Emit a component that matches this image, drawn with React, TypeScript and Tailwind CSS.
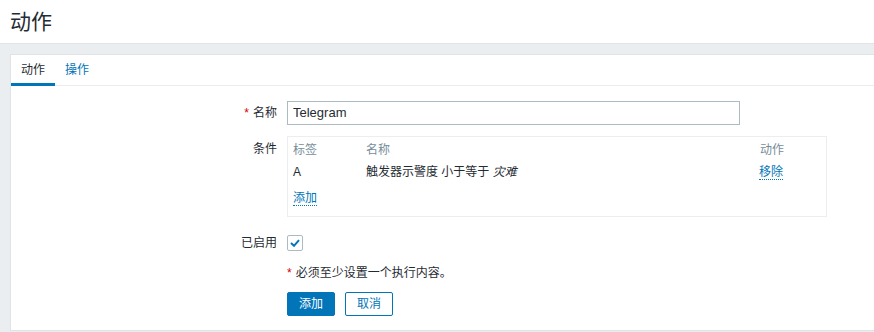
import React from "react";

const font = { fontFamily: '"Liberation Sans", Arial, "Noto Sans CJK SC", sans-serif' };

export default function App() {
  return (
    <div className="w-[874px] h-[332px] overflow-hidden bg-[#ebeef0] text-[12px] text-[#1f2c33]" style={font}>
      <header className="h-[44px] bg-white border-b border-[#dfe4e7] flex items-center pl-[10px]">
        <h1 className="text-[21px] leading-none font-normal text-[#1f2c33]">动作</h1>
      </header>
      <div className="pt-[10px] pl-[10px]">
        <div className="bg-white border border-[#dfe4e7] border-r-0 h-[277px]">
          <div className="flex h-[31px] border-b border-[#ebeef0]">
            <div className="relative px-[10px] flex items-center text-[#1f2c33]">
              动作
              <span className="absolute left-0 right-0 bottom-[-1px] h-[3px] bg-[#0275b8]" />
            </div>
            <div className="px-[10px] flex items-center text-[#0275b8]">操作</div>
          </div>

          <div className="pt-[15px]">
            {/* name row */}
            <div className="flex items-center h-[24px]">
              <div className="w-[276px] pr-[10px] text-right">
                <span className="text-[#d40000] mr-[4px]">*</span>名称
              </div>
              <div className="w-[453px] h-[24px] border border-[#acbbc2] flex items-center px-[5px] text-[13px]">Telegram</div>
            </div>

            {/* conditions */}
            <div className="flex mt-[11px]">
              <div className="w-[276px] pr-[10px] text-right pt-[4px]">条件</div>
              <div className="w-[540px] h-[81px] border border-[#ebeef0] px-[5px] pt-[4px]">
                <div className="flex h-[18px] items-center text-[#768d99]">
                  <div className="w-[73px]">标签</div>
                  <div className="w-[394px]">名称</div>
                  <div>动作</div>
                </div>
                <div className="flex h-[26px] items-center">
                  <div className="w-[73px]">A</div>
                  <div className="w-[393px]">
                    触发器示警度 小于等于 <em className="italic">灾难</em>
                  </div>
                  <div className="text-[#0275b8] border-b border-dotted border-[#0275b8] leading-[14px]">移除</div>
                </div>
                <div className="flex h-[26px] items-center">
                  <span className="text-[#0275b8] border-b border-dotted border-[#0275b8] leading-[14px]">添加</span>
                </div>
              </div>
            </div>

            {/* enabled */}
            <div className="flex items-center h-[24px] mt-[14px]">
              <div className="w-[276px] pr-[10px] text-right">已启用</div>
              <div className="w-[16px] h-[16px] border border-[#acbbc2] rounded-[2px] flex items-center justify-center">
                <svg width="10" height="8" viewBox="0 0 10 8">
                  <path d="M1 4 L4 6.8 L9 1.2" fill="none" stroke="#0275b8" strokeWidth="2" />
                </svg>
              </div>
            </div>

            {/* required note */}
            <div className="flex items-center h-[18px] mt-[9px]">
              <div className="w-[276px]" />
              <div><span className="text-[#d40000] mr-[4px]">*</span>必须至少设置一个执行内容。</div>
            </div>

            {/* buttons */}
            <div className="flex items-center mt-[10px]">
              <div className="w-[276px]" />
              <button className="w-[48px] h-[24px] bg-[#0275b8] text-white rounded-[2px] border border-[#0275b8] text-[12px]">添加</button>
              <button className="w-[48px] h-[24px] ml-[10px] bg-white text-[#0275b8] rounded-[2px] border border-[#0275b8] text-[12px]">取消</button>
            </div>
          </div>
        </div>
      </div>
    </div>
  );
}
